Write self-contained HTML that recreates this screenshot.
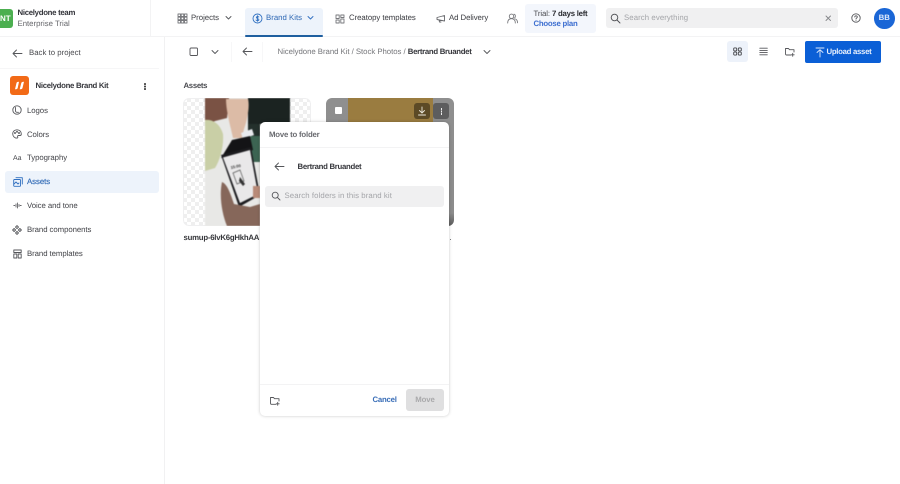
<!DOCTYPE html>
<html><head><meta charset="utf-8"><style>
html,body{margin:0;padding:0;background:#fff}
body{width:900px;height:484px;position:relative;overflow:hidden;font-family:"Liberation Sans",sans-serif;font-size:7.8px;color:#3a3a3d;text-rendering:geometricPrecision}
.t{position:absolute;white-space:nowrap;line-height:12px;letter-spacing:-.02px}
.b{font-weight:bold;letter-spacing:-.3px}
.a{position:absolute}
svg.i{position:absolute;fill:none;stroke:#55565a;stroke-width:.9;stroke-linecap:round;stroke-linejoin:round}
.c{background-color:#fff;background-image:linear-gradient(45deg,#efefef 25%,transparent 25%,transparent 75%,#efefef 75%),linear-gradient(45deg,#efefef 25%,transparent 25%,transparent 75%,#efefef 75%);background-size:8px 8px;background-position:0 0,4px 4px}
</style></head><body>

<!-- structure lines -->
<div class="a" style="left:0;top:36px;width:900px;height:1px;background:#f3f3f4"></div>
<div class="a" style="left:150px;top:0;width:1px;height:36px;background:#f3f3f4"></div>
<div class="a" style="left:164px;top:37px;width:1px;height:447px;background:#f1f1f2"></div>
<div class="a" style="left:0;top:68px;width:159px;height:1px;background:#f6f6f7"></div>
<div class="a" style="left:231px;top:42px;width:1px;height:20px;background:#f7f7f8"></div>
<div class="a" style="left:262px;top:42px;width:1px;height:20px;background:#f7f7f8"></div>

<!-- team -->
<div class="a" style="left:-8px;top:9px;width:21px;height:19px;background:#4caf50;border-radius:3px"></div>
<div class="t b" style="left:0;top:12.500px;color:#fff;font-size:8px;letter-spacing:0">NT</div>
<div class="t b" style="left:17.500px;top:7px;color:#33343a;letter-spacing:-.29px">Nicelydone team</div>
<div class="t" style="left:17.500px;top:18px;color:#66676b;letter-spacing:-.01px">Enterprise Trial</div>

<!-- nav -->
<svg class="i" style="left:176.500px;top:13px;stroke:#77787c" width="11" height="11" viewBox="0 0 11 11" stroke-width=".7"><path d="M1 1h2.500v2.500H1zM4.200 1h2.500v2.500H4.200zM7.500 1H10v2.500H7.500zM1 4.200h2.500v2.500H1zM4.200 4.200h2.500v2.500H4.200zM7.500 4.200H10v2.500H7.500zM1 7.500h2.500V10H1zM4.200 7.500h2.500V10H4.200zM7.500 7.500H10V10H7.500z"/></svg>
<div class="t" style="left:191px;top:12px;color:#3e3f44">Projects</div>
<svg class="i" style="left:224.500px;top:15px" width="7" height="6" viewBox="0 0 7 6"><path d="M1 1.500l2.500 2.500L6 1.500"/></svg>

<div class="a" style="left:245px;top:8px;width:78px;height:27px;background:#edf3fb;border-radius:3px 3px 0 0"></div>
<div class="a" style="left:245px;top:35px;width:78px;height:2px;background:#1f5f9f;border-radius:1px"></div>
<svg class="i" style="left:251.500px;top:13px;stroke:#2f6fc0" width="11" height="11" viewBox="0 0 11 11"><circle cx="5.500" cy="5.500" r="4.500"/><path d="M6.800 4C6 3.300 4.300 3.500 4.300 4.500S6.900 5.500 6.900 6.600 5 7.800 4 7M5.500 2.700v5.600"/></svg>
<div class="t" style="left:266px;top:12px;color:#2f69b5;letter-spacing:.01px">Brand Kits</div>
<svg class="i" style="left:307px;top:15px;stroke:#2f6fc0" width="7" height="6" viewBox="0 0 7 6"><path d="M1 1.500l2.500 2.500L6 1.500"/></svg>

<svg class="i" style="left:335px;top:13.500px;stroke:#77787c" width="10" height="10" viewBox="0 0 10 10" stroke-width=".8"><path d="M1 1h3.200v3.500H1zM5.800 1H9v2.500H5.800zM1 6h3.200v3H1zM5.800 5H9v4H5.800z"/></svg>
<div class="t" style="left:349px;top:12px;color:#3a3b40;letter-spacing:-.05px">Creatopy templates</div>
<svg class="i" style="left:435.500px;top:14px;stroke:#66676b" width="10" height="9" viewBox="0 0 10 9"><path d="M1 3.500L8.500 1.500V7L1 5.500zM3 6l.5 2h1.500"/></svg>
<div class="t" style="left:449px;top:12px;color:#3a3b40;letter-spacing:-.06px">Ad Delivery</div>
<svg class="i" style="left:507px;top:12.500px;stroke:#77787c" width="11" height="11" viewBox="0 0 11 11" stroke-width=".8"><circle cx="4.500" cy="3.300" r="2.200"/><path d="M.7 10c0-3 1.500-4.300 3.800-4.300S8.300 7 8.300 10M7 1.200c1.500.2 2 2.800.3 4M8.500 6c1.200.5 2 1.800 2 3.800"/></svg>

<div class="a" style="left:525px;top:4px;width:71px;height:29px;background:#f3f6fc;border-radius:3px"></div>
<div class="t" style="left:533.500px;top:7.500px;color:#4a4b50;letter-spacing:-.1px">Trial: <span class="b" style="color:#2a2b30;letter-spacing:-.25px">7 days left</span></div>
<div class="t b" style="left:533.500px;top:18px;color:#3d6fd0;letter-spacing:-.25px">Choose plan</div>

<div class="a" style="left:606px;top:8px;width:232px;height:20px;background:#f0f0f1;border-radius:3px"></div>
<svg class="i" style="left:610px;top:13px;stroke:#4b4c50" width="11" height="11" viewBox="0 0 11 11"><circle cx="4.500" cy="4.500" r="3.300"/><path d="M7 7l3 3"/></svg>
<div class="t" style="left:624px;top:12px;color:#a4a5a9;letter-spacing:.08px">Search everything</div>
<svg class="i" style="left:825px;top:15px;stroke:#85868a" width="7" height="7" viewBox="0 0 7 7"><path d="M1 1l4.500 4.500M5.500 1L1 5.500"/></svg>
<svg class="i" style="left:851px;top:13px" width="10" height="10" viewBox="0 0 10 10" stroke-width=".9"><circle cx="5" cy="5" r="4.200"/><path d="M3.800 4c0-1.600 2.500-1.600 2.500 0 0 1-1.300 1-1.300 2M5 7.300v.1"/></svg>
<div class="a b" style="left:874px;top:8px;width:20.500px;height:20.500px;border-radius:50%;background:#1a66d6;color:#dfe9fb;text-align:center;line-height:20.500px;font-size:7.800px;letter-spacing:0">BB</div>

<!-- toolbar -->
<svg class="i" style="left:189px;top:47px;stroke:#55565a" width="10" height="10" viewBox="0 0 10 10"><rect x="1" y="1" width="7.500" height="7.500" rx="1"/></svg>
<svg class="i" style="left:211px;top:49px" width="8" height="6" viewBox="0 0 8 6"><path d="M1 1.500l3 3 3-3"/></svg>
<svg class="i" style="left:241.500px;top:47px" width="11" height="9" viewBox="0 0 11 9"><path d="M10 4.500H1.200M4.500 1L1 4.500 4.500 8"/></svg>
<div class="t" style="left:277.500px;top:46px;color:#76777b;letter-spacing:-.04px">Nicelydone Brand Kit / Stock Photos / <span class="b" style="color:#36373c">Bertrand Bruandet</span></div>
<svg class="i" style="left:483px;top:49px" width="8" height="6" viewBox="0 0 8 6"><path d="M1 1.500l3 3 3-3"/></svg>

<div class="a" style="left:727px;top:41px;width:21px;height:21px;background:#edf2fa;border-radius:3px"></div>
<svg class="i" style="left:733px;top:47px;stroke:#44454a" width="9" height="9" viewBox="0 0 9 9"><rect x=".7" y=".9" width="3" height="3" rx=".8"/><rect x="5.300" y=".9" width="3" height="3" rx=".8"/><rect x=".7" y="5.100" width="3" height="3" rx=".8"/><rect x="5.300" y="5.100" width="3" height="3" rx=".8"/></svg>
<svg class="i" style="left:759px;top:47px;stroke:#55565a" width="9" height="9" viewBox="0 0 9 9"><path d="M.8 1.200h7.500M.8 3.400h7.500M.8 5.600h7.500M.8 7.800h7.500"/></svg>
<svg class="i" style="left:784.500px;top:47px" width="10" height="10" viewBox="0 0 10 10"><path d="M6 8H1.500a1 1 0 0 1-1-1V1.500h3l1 1.200H9V5M7.700 6.300v3M6.200 7.800h3"/></svg>
<div class="a" style="left:805px;top:41px;width:76px;height:21.500px;background:#0b5fd6;border-radius:2px"></div>
<svg class="i" style="left:814.500px;top:46.500px;stroke:#dce8fb" width="10" height="11" viewBox="0 0 10 11"><path d="M1 1h8M5 10V3M2 5.500L5 2.700l3 2.800"/></svg>
<div class="t b" style="left:826.500px;top:45.500px;color:#e6effd">Upload asset</div>

<!-- sidebar -->
<svg class="i" style="left:12px;top:48.500px" width="11" height="9" viewBox="0 0 11 9"><path d="M10 4.500H1.200M4.500 1L1 4.500 4.500 8"/></svg>
<div class="t" style="left:29px;top:46.500px;color:#4b4c50;letter-spacing:.01px">Back to project</div>

<div class="a" style="left:10px;top:76px;width:18.500px;height:19px;border-radius:3px;background:#f26a17"></div>
<svg class="a" style="left:10px;top:76px" width="19" height="19" viewBox="0 0 19 19"><path d="M6.500 7c.4-1 1-1.300 2.500-1.300L7.700 12c-.3.900-1 1.300-2.700 1.300zM11.300 7c.4-1 1-1.300 2.700-1.300L12.500 12c-.3.900-1 1.300-2.800 1.300z" fill="#fff"/></svg>
<div class="t b" style="left:35.500px;top:79.500px;color:#36373c">Nicelydone Brand Kit</div>
<div class="a" style="left:144px;top:83px;width:1.500px;height:1.500px;background:#444;box-shadow:0 2.500px #444,0 5px #444;border-radius:50%"></div>

<div class="a" style="left:5px;top:171px;width:154px;height:22px;background:#edf3fb;border-radius:3px"></div>

<svg class="i" style="left:12px;top:105px" width="10" height="10" viewBox="0 0 10 10"><circle cx="5" cy="5" r="4.200"/><path d="M3.500 2.500V6c0 1 1 1.500 3 1.300"/></svg>
<div class="t" style="left:27px;top:104.500px;color:#44454a;letter-spacing:-.07px">Logos</div>
<svg class="i" style="left:12px;top:129px" width="10" height="10" viewBox="0 0 10 10"><path d="M5 .8C2.500.8.700 2.500.700 4.800c0 2.500 2 4.300 4.300 4.300.8 0 1-.6.700-1.200-.4-.8.100-1.400 1-1.400h1.300c.8 0 1.300-.6 1.300-1.500C9.300 2.500 7.500.8 5 .8z"/><circle cx="3" cy="4" r=".5"/><circle cx="5" cy="2.800" r=".5"/><circle cx="7" cy="4" r=".5"/></svg>
<div class="t" style="left:27px;top:128.500px;color:#44454a;letter-spacing:-.07px">Colors</div>
<div class="t" style="left:13px;top:152.500px;color:#44454a;font-size:7px;letter-spacing:0">Aa</div>
<div class="t" style="left:27px;top:152px;color:#44454a;letter-spacing:-.07px">Typography</div>
<svg class="i" style="left:12.500px;top:177px;stroke:#2f6fc0" width="10" height="10" viewBox="0 0 10 10"><rect x=".7" y="2.500" width="6.800" height="6.800" rx=".7"/><path d="M3 .7h6.300V7M1 7l2-2 2 2 1-1"/></svg>
<div class="t" style="left:27px;top:176px;color:#2f69b5;letter-spacing:-.04px;-webkit-text-stroke:.15px #2f69b5">Assets</div>
<svg class="i" style="left:13px;top:201px;stroke:#66676b" width="9" height="9" viewBox="0 0 9 9"><path d="M.8 4.500h1M3 3v3M4.500 2v5M6 3.500v2M7.200 4.500h1"/></svg>
<div class="t" style="left:27px;top:200px;color:#44454a;letter-spacing:-.07px">Voice and tone</div>
<svg class="i" style="left:12px;top:224.500px" width="10" height="10" viewBox="0 0 10 10"><path d="M5 .6l1.500 1.500L5 3.600 3.500 2.100zM5 6.400l1.500 1.500L5 9.400 3.500 7.900zM2.100 3.500L3.600 5 2.100 6.500.6 5zM7.900 3.500L9.400 5 7.900 6.500 6.400 5z"/></svg>
<div class="t" style="left:27px;top:224px;color:#44454a;letter-spacing:-.07px">Brand components</div>
<svg class="i" style="left:12.500px;top:248.500px" width="9" height="10" viewBox="0 0 9 10" stroke-width=".8"><path d="M.8 1h7.400v2.500H.8zM.8 5h3v4h-3zM5.200 5h3v4h-3z"/></svg>
<div class="t" style="left:27px;top:247.500px;color:#44454a;letter-spacing:-.07px">Brand templates</div>

<!-- main -->
<div class="t b" style="left:183.500px;top:79.500px;color:#4a4b50;letter-spacing:-.32px">Assets</div>

<!-- card 1 -->
<div class="a c" style="left:183px;top:98px;width:128px;height:128px;border-radius:6px;overflow:hidden;box-shadow:inset 0 0 0 1px #efeff0">
<svg class="a" style="left:22px;top:0;filter:blur(.6px)" width="85" height="128" viewBox="0 0 85 128">
<rect width="85" height="128" fill="#e8e8e6"/>
<path d="M43 0h42v26H43z" fill="#1b2321"/>
<path d="M0 0h24l-2 20-12 3L0 28z" fill="#7a5244"/>
<path d="M0 22c8-1 15 4 18 14 1 12-3 26-8 34L0 73z" fill="#c9cfa6"/>
<path d="M21 1h22c2 8-1 22-4 30l-2 9H28c-2-10-7-26-7-39z" fill="#dcbba6"/>
<path d="M43 38h12v26H43z" fill="#3c6452"/>
<path d="M43 26h12v12H43z" fill="#24302c"/>
<path d="M36 35l11-4 2 6-11 4z" fill="#e8eaee"/>
<path d="M27 42l18-4 3 14-32 8z" fill="#141416"/>
<path d="M16 57l30-8 9 48-21 12z" fill="#1c1c1f"/>
<path d="M18 59.500l27-7.500 8 44-18 9z" fill="#e9e8e9"/>
<path d="M17 84c5 2 8 10 12 22l16 3 10-3v22H22c-5-12-8-30-5-44z" fill="#86675a"/>
<path d="M48 88h7v12h-7z" fill="#b88a78"/>
<path d="M28 75l7-3 4 11-7 3z" fill="none" stroke="#555" stroke-width=".7"/>
<path d="M35 79l5 7-2 2-4-5z" fill="#333"/>
<text x="26" y="71" font-size="4" font-family="Liberation Sans" font-weight="bold" fill="#333" transform="rotate(-12 26 71)">15:00</text>
</svg>
</div>
<div class="t b" style="left:183.500px;top:231.500px;color:#37383c;letter-spacing:-.24px">sumup-6lvK6gHkhAA</div>

<!-- card 2 -->
<div class="a" style="left:326px;top:98px;width:127.500px;height:127.500px;border-radius:6px;overflow:hidden;background:linear-gradient(#8f8f8f,#8c8c8c 90%,#5a5a5a)">
<div class="a" style="left:21.500px;top:0;width:85px;height:128px;background:#9a7c40"></div>
</div>
<div class="a" style="left:334.500px;top:107px;width:7px;height:7px;background:#fff;border-radius:1px"></div>
<div class="a" style="left:414px;top:103px;width:16px;height:16px;background:#5c4a26;border-radius:3px"></div>
<svg class="i" style="left:417px;top:106px;stroke:#ece8dc" width="10" height="10" viewBox="0 0 10 10"><path d="M5 1v5.500M2.500 4.500L5 7l2.500-2.500M1.500 9h7"/></svg>
<div class="a" style="left:433px;top:103px;width:16px;height:16px;background:#5d5d5e;border-radius:3px"></div>
<div class="a" style="left:440.500px;top:108px;width:1.500px;height:1.500px;background:#eee;box-shadow:0 2.500px #eee,0 5px #eee"></div>
<div class="t" style="left:449.500px;top:231.500px;color:#37383c">.</div>

<!-- modal -->
<div class="a" style="left:260px;top:122px;width:189px;height:294px;background:#fff;border-radius:5px;box-shadow:0 0 3px rgba(0,0,0,.22)"></div>
<div class="t b" style="left:269px;top:129px;color:#6a6b70;letter-spacing:-.2px">Move to folder</div>
<div class="a" style="left:260px;top:147px;width:189px;height:1px;background:#f3f3f4"></div>
<svg class="i" style="left:273.500px;top:162px" width="11" height="9" viewBox="0 0 11 9"><path d="M10 4.500H1.200M4.500 1L1 4.500 4.500 8"/></svg>
<div class="t b" style="left:297.500px;top:160.500px;color:#36373c">Bertrand Bruandet</div>
<div class="a" style="left:265px;top:186px;width:179px;height:21px;background:#f0f0f1;border-radius:3px"></div>
<svg class="i" style="left:271px;top:191px;stroke:#55565a" width="10" height="10" viewBox="0 0 10 10"><circle cx="4.200" cy="4.200" r="3"/><path d="M6.500 6.500L9 9"/></svg>
<div class="t" style="left:284.500px;top:190px;color:#a4a5a9;letter-spacing:.08px">Search folders in this brand kit</div>
<div class="a" style="left:260px;top:384px;width:189px;height:1px;background:#f3f3f4"></div>
<svg class="i" style="left:270px;top:395.500px" width="10" height="10" viewBox="0 0 10 10"><path d="M6 8.300H1.500a1 1 0 0 1-1-1V1.500h3l1 1.200H9V5M7.700 6.300v3M6.200 7.800h3"/></svg>
<div class="t b" style="left:372.500px;top:394px;color:#3b6fb8;letter-spacing:-.24px">Cancel</div>
<div class="a b" style="left:406px;top:389px;width:38px;height:22px;background:#dfdfe0;border-radius:3px;color:#a9a9ab;text-align:center;line-height:22px;letter-spacing:-.1px">Move</div>

</body></html>
